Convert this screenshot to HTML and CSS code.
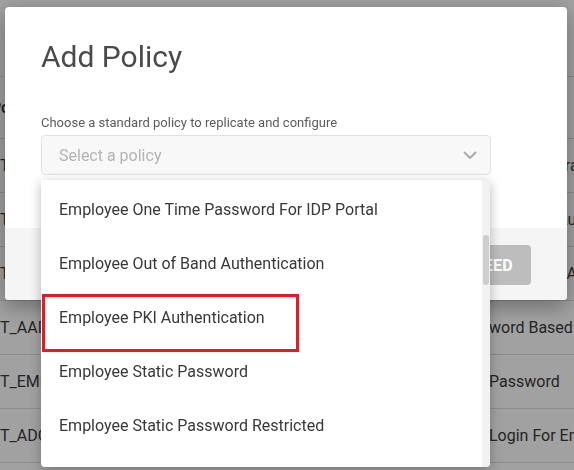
FILE: index.html
```html
<!DOCTYPE html>
<html lang="en">
<head>
<meta charset="utf-8">
<title>Add Policy</title>
<link rel="stylesheet" href="styles.css">
</head>
<body>
<div class="page">
  <div class="table">
    <div class="row head"><span class="c1 ind">Policy ID</span><span class="c3">Description</span></div>
    <div class="row"><span class="c1">T_OTP_IDP</span><span class="c3">Push Integration</span></div>
    <div class="row"><span class="c1">T_OOB_AUTH</span><span class="c3">Standard Authentication</span></div>
    <div class="row"><span class="c1">T_PKI_AUTH</span><span class="c3">Certificate Authentication</span></div>
    <div class="row"><span class="c1">T_AADJ_PWD</span><span class="c3">word Based Authentication</span></div>
    <div class="row"><span class="c1">T_EMP_STATIC</span><span class="c3">Password</span></div>
    <div class="row"><span class="c1">T_ADC_LOGIN</span><span class="c3">Login For Employees</span></div>
  </div>
</div>

<div class="overlay"></div>

<div class="modal">
  <div class="modal-body">
    <h2 class="title">Add Policy</h2>
    <div class="label">Choose a standard policy to replicate and configure</div>
    <div class="select">
      <span class="placeholder">Select a policy</span>
      <svg class="chev" width="14" height="8" viewBox="0 0 14 8"><polyline points="1,1 7,7 13,1" fill="none" stroke="#ababab" stroke-width="2"/></svg>
    </div>
  </div>
  <div class="modal-footer">
    <button class="btn">PROCEED</button>
  </div>
</div>

<div class="menu">
  <ul class="list">
    <li class="item">Employee One Time Password For IDP Portal</li>
    <li class="item">Employee Out of Band Authentication</li>
    <li class="item marked">Employee PKI Authentication</li>
    <li class="item">Employee Static Password</li>
    <li class="item">Employee Static Password Restricted</li>
    <li class="item">Employee Windows Login</li>
  </ul>
  <div class="track"><div class="thumb"></div></div>
</div>
</body>
</html>
```

FILE: styles.css
```css
* { box-sizing: border-box; }
html, body { margin: 0; padding: 0; }
body {
  width: 574px;
  height: 470px;
  overflow: hidden;
  background: #fff;
  font-family: Roboto, "Liberation Sans", sans-serif;
  color: #333;
}

.page { padding-top: 76px; }
.table { border-top: 1px solid #dcdcdc; }
.row {
  display: flex;
  align-items: center;
  height: 54px;
  border-bottom: 1px solid #dcdcdc;
  font-size: 16px;
  white-space: nowrap;
  color: #3a3a3a;
}
.row.head { height: 62px; font-weight: 500; color: #2a2a2a; }
.row.head .c3 { visibility: hidden; }
.c1 { flex: 0 0 489px; overflow: hidden; }
.c1.ind { text-indent: -9px; }
.c3 { flex: 1; overflow: hidden; }

.overlay {
  position: fixed;
  inset: 0;
  background: rgba(0, 0, 0, 0.37);
}

.modal {
  position: fixed;
  left: 5px;
  top: 7px;
  width: 562px;
  height: 293px;
  background: #fff;
  border-radius: 4px;
  overflow: hidden;
  display: flex;
  flex-direction: column;
  box-shadow: 0 6px 22px rgba(0, 0, 0, 0.35);
}
.modal-body {
  height: 221px;
  padding: 32px 36px 0;
}
.title {
  margin: 0;
  font-size: 30px;
  line-height: 35px;
  font-weight: 400;
  color: #4a4a4a;
}
.label {
  margin-top: 41px;
  font-size: 13px;
  line-height: 15px;
  color: #5c5c5c;
}
.select {
  margin-top: 5px;
  height: 40px;
  width: 450px;
  border: 1px solid #e2e2e2;
  border-radius: 4px;
  background: #f8f8f8;
  display: flex;
  align-items: center;
  justify-content: space-between;
  padding: 0 13px 0 17px;
}
.placeholder { font-size: 16px; color: #b3b3b3; }
.chev { display: block; }

.modal-footer {
  flex: 1;
  background: #f5f5f5;
  display: flex;
  justify-content: flex-end;
  align-items: flex-start;
  padding: 17px 36px 0;
}
.btn {
  height: 40px;
  padding: 0 18px;
  border: none;
  border-radius: 4px;
  background: #bdbdbd;
  color: #fff;
  font-family: Roboto, "Liberation Sans", sans-serif;
  font-size: 16px;
  font-weight: 700;
  letter-spacing: 0.3px;
}

.menu {
  position: absolute;
  left: 41px;
  top: 180px;
  width: 449px;
  height: 287px;
  background: #fff;
  border-radius: 0 0 4px 4px;
  box-shadow: 0 3px 12px rgba(0, 0, 0, 0.28);
  overflow: hidden;
  display: flex;
}
.list {
  list-style: none;
  margin: 0;
  padding: 2px 0 0;
  flex: 1;
}
.item {
  position: relative;
  height: 54px;
  display: flex;
  align-items: center;
  padding-left: 18px;
  font-size: 16px;
  color: #383838;
  white-space: nowrap;
}
.item.marked::after {
  content: "";
  position: absolute;
  left: 1px;
  top: 4px;
  width: 251px;
  height: 52px;
  border: 3px solid #e31b23;
}
.track {
  flex: 0 0 8px;
  background: #f1f1f1;
  padding: 55px 1px 0;
}
.thumb {
  height: 50px;
  border-radius: 3px;
  background: #cdcdcd;
}
```
